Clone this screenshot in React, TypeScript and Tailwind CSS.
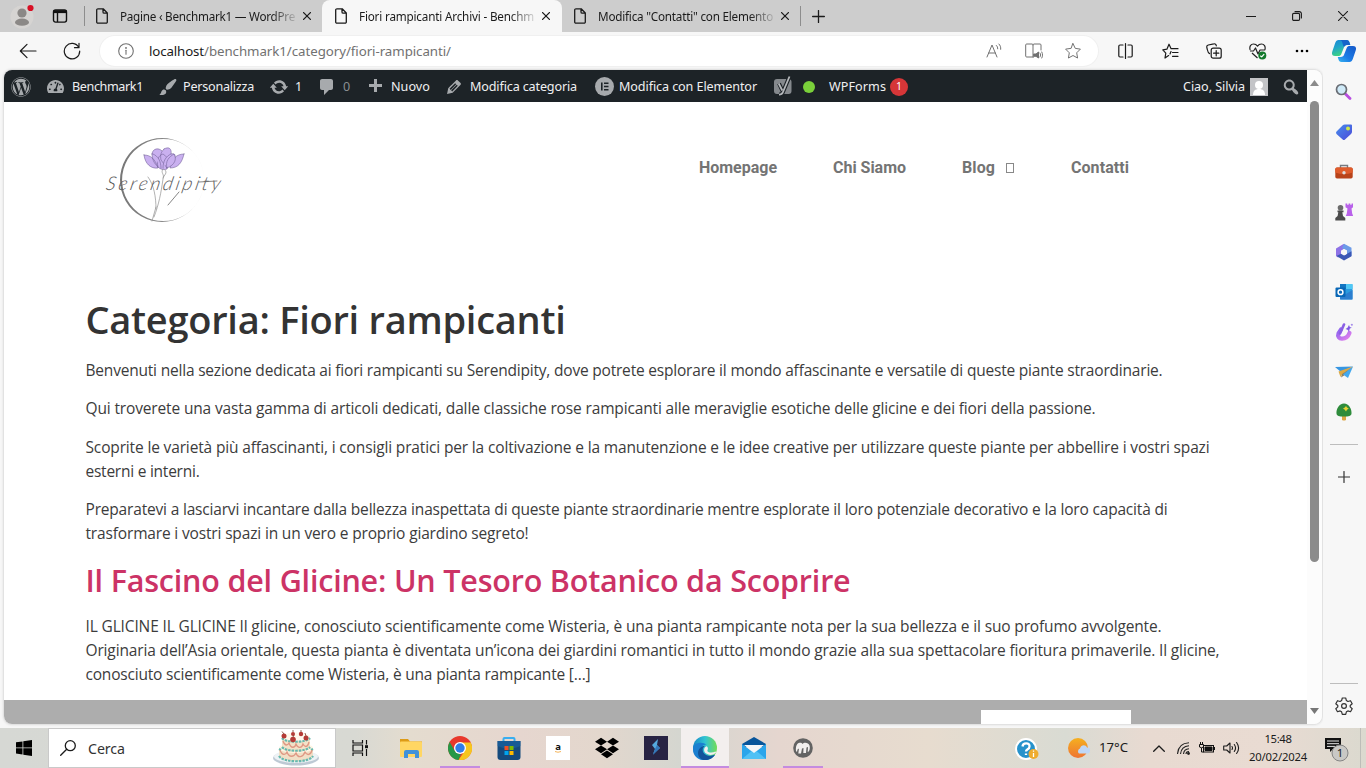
import { useLayoutEffect, useRef } from 'react';
import type { ReactNode } from 'react';
import { FaDropbox, FaTachometerAlt, FaWordpress } from 'react-icons/fa';

const UI = "font-['Noto_Sans','Open_Sans',sans-serif]";

/* One line of text whose tracking is adjusted so that it fills its box. */
function Line({ children, className }: { children: string; className: string }) {
  const box = useRef<HTMLDivElement>(null);
  const text = useRef<HTMLSpanElement>(null);
  useLayoutEffect(() => {
    if (!box.current || !text.current) return;
    text.current.style.letterSpacing = '0px';
    const spare = box.current.getBoundingClientRect().width - text.current.getBoundingClientRect().width;
    text.current.style.letterSpacing = `${spare / children.length}px`;
  }, [children]);
  return (
    <div ref={box} className={`shrink-0 whitespace-nowrap ${className}`}>
      <span ref={text}>{children}</span>
    </div>
  );
}

function Stroke({ children, className, box = '0 0 20 20', width = 1.2 }: { children: ReactNode; className: string; box?: string; width?: number }) {
  return (
    <svg viewBox={box} className={`shrink-0 ${className}`} fill="none" stroke="currentColor" strokeWidth={width} strokeLinecap="round" strokeLinejoin="round">
      {children}
    </svg>
  );
}

function Dash({ d, className }: { d: string; className: string }) {
  return (
    <svg viewBox="0 0 20 20" className={`size-5 shrink-0 text-[#a7aaad] ${className}`} fill="currentColor">
      <path d={d} />
    </svg>
  );
}

const PageIcon = () => (
  <Stroke className="h-4 w-3" box="0 0 12 16" width={1.3}>
    <path d="M2 .8h5.2L11.3 5v9a1.2 1.2 0 0 1-1.2 1.2H1.9A1.2 1.2 0 0 1 .7 14V2A1.2 1.2 0 0 1 2 .8zM7 .9V4a1.2 1.2 0 0 0 1.2 1.2h3" />
  </Stroke>
);
const TabClose = () => (
  <Stroke className="size-2" box="0 0 8 8" width={1.3}>
    <path d="M.6.6l6.8 6.8M7.4.6L.6 7.4" />
  </Stroke>
);

function TabTitle({ children }: { children: string }) {
  return (
    <div className="ml-3 w-[176px] [mask-image:linear-gradient(to_right,black_86%,transparent_102%)]">
      <Line className="w-[175px]">{children}</Line>
    </div>
  );
}

function TitleBar() {
  return (
    <header className="flex h-8 shrink-0 bg-[#cdcdcd] text-[11.7px] leading-4 text-[#1b1b1b]">
      <div className="flex w-[84px] shrink-0 items-center">
        <svg viewBox="0 0 24 28" className="ml-2 h-7 w-7 shrink-0">
          <circle cx="12" cy="15" r="11.5" fill="#d6d4d2" />
          <circle cx="12" cy="11" r="4.6" fill="#8b8886" />
          <ellipse cx="12" cy="20.2" rx="7" ry="3.6" fill="#8b8886" />
          <circle cx="20.5" cy="6" r="3.1" fill="#d80f24" />
        </svg>
        <svg viewBox="0 0 16 16" className="ml-4 size-4" fill="none" stroke="#111" strokeWidth="1.4">
          <rect x="1.5" y="1.9" width="13" height="12.2" rx="2" />
          <path d="M1.5 3.6h13" strokeWidth="3" />
          <path d="M5.5 4v10" />
        </svg>
      </div>
      <div className="my-1.5 w-px bg-[#8d8d8d]" />
      <div className="flex w-[237px] shrink-0 items-center pl-[11px]">
        <PageIcon />
        <TabTitle>Pagine ‹ Benchmark1 — WordPre</TabTitle>
        <div className="ml-[7px]"><TabClose /></div>
      </div>
      <div className="flex w-[240px] shrink-0 items-center rounded-t-lg bg-[#f7f7f7] pl-[13px]">
        <PageIcon />
        <TabTitle>Fiori rampicanti Archivi - Benchm</TabTitle>
        <div className="ml-[7px]"><TabClose /></div>
      </div>
      <div className="flex w-[238px] shrink-0 items-center pl-3">
        <PageIcon />
        <TabTitle>Modifica "Contatti" con Elemento</TabTitle>
        <div className="ml-[7px]"><TabClose /></div>
      </div>
      <div className="my-1.5 w-px bg-[#8d8d8d]" />
      <div className="flex w-9 items-center pl-[11px]">
        <Stroke className="size-[13px]" box="0 0 13 13" width={1.3}><path d="M6.5.6v11.8M.6 6.5h11.8" /></Stroke>
      </div>
      <div className="ml-auto flex items-center gap-9 pr-[18px]">
        <Stroke className="size-2.5" box="0 0 10 10" width={1.1}><path d="M.2 5.5h9.6" /></Stroke>
        <Stroke className="size-2.5" box="0 0 10 10" width={1.1}><rect x=".6" y="2.4" width="7" height="7" rx="1.2" /><path d="M3 .6h4.2a2.2 2.2 0 0 1 2.2 2.2V7" /></Stroke>
        <Stroke className="size-2.5" box="0 0 10 10" width={1.1}><path d="M.4.4l9.2 9.2M9.6.4L.4 9.6" /></Stroke>
      </div>
    </header>
  );
}

const STAR = 'M10 1.8l2.5 5.3 5.7.8-4.1 4.1 1 5.8-5.1-2.8-5.1 2.8 1-5.8L1.8 7.9l5.7-.8z';

function Toolbar() {
  return (
    <div className="flex h-[38px] shrink-0 items-center bg-[#f7f7f7] text-[#1a1a1a]">
      <Stroke className="ml-[19px] h-4 w-[18px]" box="0 0 18 16"><path d="M17 8H1.4M8 1.3L1.3 8 8 14.7" /></Stroke>
      <Stroke className="ml-[26px] size-[18px]" box="0 0 18 18"><path d="M15.8 5.5A7.7 7.7 0 1 0 16.7 9M16 1.3v4.4h-4.5" /></Stroke>
      <div className="ml-[19px] flex h-[30px] w-[998px] items-center rounded-full bg-white text-[#717171] ring-1 ring-[#f0f0f0]">
        <Stroke className="ml-[18px] size-4" box="0 0 16 16" width={1.1}><circle cx="8" cy="8" r="7.3" /><path d="M8 7.2v4" /><circle cx="8" cy="4.9" r=".4" fill="currentColor" /></Stroke>
        <Line className="mt-px ml-[15px] w-[55px] text-[13.3px] text-[#1a1a1a]">localhost</Line>
        <Line className="mt-px w-[247px] text-[13.3px]">/benchmark1/category/fiori-rampicanti/</Line>
        <div className="ml-auto flex items-center pr-4">
          <Stroke className="h-4 w-[17px]" box="0 0 17 16" width={1}><path d="M1 14L6 2l5 12M2.8 10h6.5M10.3 2.4c1 .8 1.4 1.9 1.4 3.4M12.9 1c1.4 1.4 2 3 1.8 5.3" /></Stroke>
          <Stroke className="ml-[22px] h-4 w-[18px]" box="0 0 18 16" width={1}><path d="M8.5 14H1.7a1 1 0 0 1-1-1V2a1 1 0 0 1 1-1H7a1 1 0 0 1 1 1v12M8 2a1 1 0 0 1 1-1h6a1 1 0 0 1 1 1v5M15 10c.8 1 .8 3 0 4M16.8 9c1 2 1 4.3 0 6" /><path d="M9 11h2l2.5-2v6L11 13.3H9z" fill="currentColor" /></Stroke>
          <Stroke className="ml-[21px] size-[18px]" width={1.1}><path d={STAR} /></Stroke>
        </div>
      </div>
      <div className="flex flex-1 items-center">
        <Stroke className="ml-5 h-4 w-[15px]" box="0 0 15 16"><path d="M5 2H2A1.2 1.2 0 0 0 .8 3.2v9.6A1.2 1.2 0 0 0 2 14h3M10 2h3a1.2 1.2 0 0 1 1.2 1.2v9.6A1.2 1.2 0 0 1 13 14h-3M7.5.6v14.8" /></Stroke>
        <Stroke className="ml-[29px] h-4 w-[17px]" box="0 0 17 16"><path d="M6.6 12.6L3 15l.8-4.9L.8 6.9l4.1-.7L7 1.2l2.1 4.5H16M10.500 9.500H16M10.500 13.300H16M9 8.500l-1 2.500" /></Stroke>
        <Stroke className="ml-[27px] size-4" box="0 0 16 16"><rect x="5.2" y="5.2" width="10" height="10" rx="2" /><path d="M10.2 7.6v5.2M7.6 10.2h5.2M3.6 10.6C2 10 1.7 8.5 1.3 6.5L.8 4.3A2 2 0 0 1 2.3 2L7.8.8A2 2 0 0 1 10.3 2.8" /></Stroke>
        <svg viewBox="0 0 18 17" className="ml-[27px] h-[17px] w-[18px]" fill="none" stroke="#222" strokeWidth="1.2" strokeLinejoin="round">
          <path d="M1.2 7C0 3.5 2 1 4.500 1 6.500 1 7.700 2 8.500 3.200 9.300 2 10.500 1 12.500 1 15 1 17 3.500 15.800 7M1 8h3.500l2-3 2.500 6 2-4h5M3 10l5.500 5" />
          <circle cx="13.3" cy="12.5" r="4" fill="#137a2c" stroke="none" /><path d="M11.3 12.7l1.4 1.2 2.5-2.8" stroke="#fff" />
        </svg>
        <svg viewBox="0 0 14 4" className="ml-7 h-1 w-[14px]"><circle cx="2" cy="2" r="1.3" /><circle cx="7" cy="2" r="1.3" /><circle cx="12" cy="2" r="1.3" /></svg>
        <svg viewBox="0 0 24 22" className="ml-[23px] h-[22px] w-6">
          <defs>
            <linearGradient id="copA" x1="0" y1="0" x2=".4" y2="1"><stop offset="0" stopColor="#1784d8" /><stop offset=".5" stopColor="#21a6c8" /><stop offset="1" stopColor="#40d67c" /></linearGradient>
            <linearGradient id="copB" x1="1" y1="0" x2="0" y2="1"><stop offset="0" stopColor="#1558c8" /><stop offset=".6" stopColor="#1b7ce6" /><stop offset="1" stopColor="#39b6f0" /></linearGradient>
          </defs>
          <path d="M6.5 0h8c2 0 2.500 1 3 2.500l.8 2.500h-3c-2 0-3 1-3.500 2.700L9.300 14c-.6 1.600-1.500 2-3 2H3c-2.700 0-3.600-2-2.700-4.600L3.200 3C3.900 1 5 0 6.500 0z" fill="url(#copA)" />
          <path d="M17.5 22h-8c-2 0-2.500-1-3-2.500L5.700 17h3c2 0 3-1 3.500-2.700L14.700 8c.6-1.600 1.500-2 3-2H21c2.700 0 3.600 2 2.700 4.600L20.800 19c-.7 2-1.800 3-3.300 3z" fill="url(#copB)" />
          <path d="M8 0h6.500c2 0 2.500 1 3 2.500l.8 2.500h-3c-1.500 0-2.500.5-3.200 2C10 4 11 1 8 0z" fill="#1664c9" />
        </svg>
      </div>
    </div>
  );
}

function AdminBar() {
  return (
    <div className="flex h-8 items-center bg-[#1d2327] pt-px text-[12.6px] leading-[31px] text-[#f0f0f1]">
      <FaWordpress className="ml-[7px] size-5 shrink-0 text-[#a7aaad]" />
      <FaTachometerAlt className="ml-4 size-[17px] shrink-0 text-[#a7aaad]" />
      <Line className="ml-2 w-[71px]">Benchmark1</Line>
      <Dash className="ml-[15px]" d="M18.33 3.57s.27-.8-.31-1.36c-.53-.52-1.22-.24-1.22-.24-.61.3-5.76 3.47-7.67 5.57-.86.96-2.06 3.79-1.09 4.82.92.98 3.96-.17 4.79-1 2.06-2.06 5.21-7.17 5.5-7.79zM1.4 17.65c2.37-1.56 1.46-3.41 3.23-4.64.93-.65 2.22-.62 3.08.29.63.67.8 2.57-.16 3.46-1.57 1.45-4 1.55-6.15.89z" />
      <Line className="ml-[5px] w-[71px]">Personalizza</Line>
      <Dash className="ml-[15px]" d="M10.2 3.28c3.53 0 6.43 2.61 6.92 6h2.08l-3.5 4-3.5-4h2.32c-.45-1.97-2.21-3.45-4.32-3.45-1.45 0-2.73.71-3.54 1.78L4.95 5.66C6.23 4.2 8.11 3.28 10.2 3.28zm-.4 13.44c-3.52 0-6.43-2.61-6.92-6H.8l3.5-4c1.17 1.33 2.33 2.67 3.5 4H5.48c.45 1.97 2.21 3.45 4.32 3.45 1.45 0 2.73-.71 3.54-1.78l1.71 1.95c-1.28 1.46-3.15 2.38-5.25 2.38z" />
      <Line className="ml-1.5 w-[7px]">1</Line>
      <Dash className="ml-[15px]" d="M5 2h9c1.1 0 2 .9 2 2v7c0 1.1-.9 2-2 2h-2l-5 5v-5H5c-1.1 0-2-.9-2-2V4c0-1.1.9-2 2-2z" />
      <Line className="ml-1.5 w-[7px] text-[#8b8f92]">0</Line>
      <Dash className="ml-[15px]" d="M17 7v3h-5v5H9v-5H4V7h5V2h3v5h5z" />
      <Line className="ml-1.5 w-[39px]">Nuovo</Line>
      <Dash className="ml-[14px]" d="M13.89 3.39l2.71 2.72c.46.46.42 1.24.03 1.64l-8.01 8.02-5.56 1.16 1.16-5.58s7.6-7.63 7.99-8.03c.39-.39 1.22-.39 1.68.07zm-2.73 2.79l-5.59 5.61 1.11 1.11 5.54-5.65zm-2.97 8.23l5.58-5.6-1.07-1.08-5.59 5.6z" />
      <Line className="ml-1.5 w-[107px]">Modifica categoria</Line>
      <svg viewBox="0 0 19 19" className="ml-[18px] size-[19px] shrink-0"><circle cx="9.5" cy="9.5" r="9.5" fill="#a7aaad" /><path d="M6 5.500h1.600v8H6zM9 5.500h4.500V7H9zM9 8.700h4.500v1.500H9zM9 12h4.500v1.500H9z" fill="#1d2327" /></svg>
      <Line className="ml-[5px] w-[138px]">Modifica con Elementor</Line>
      <svg viewBox="0 0 18 20" className="-mt-px ml-[17px] h-5 w-[18px] shrink-0">
        <rect x="0" y="3" width="17.5" height="15" rx="3" fill="#85898d" />
        <path d="M5 7.500l3.500 7.500M15.500.5L9 16q-1 2.700-4 2.700" fill="none" stroke="#1d2327" strokeWidth="4" />
        <path d="M4.700 7.500l3.600 7M15.500.5L9 16q-1 2.700-4 2.700" fill="none" stroke="#b4b7ba" strokeWidth="1.8" />
      </svg>
      <div className="ml-[11px] size-3 shrink-0 rounded-full bg-[#7ad03a]" />
      <Line className="ml-3.5 w-[57px]">WPForms</Line>
      <div className="ml-1 flex size-[18px] shrink-0 items-center justify-center rounded-full bg-[#d63638] text-[10.5px] text-white">1</div>
      <Line className="ml-auto w-[62px]">Ciao, Silvia</Line>
      <svg viewBox="0 0 18 18" className="ml-[5px] size-[18px] shrink-0"><path fill="#c3c4c7" d="M0 0h18v18H0z" /><circle cx="9" cy="7" r="4" fill="#fff" /><path d="M3 17c0-4 2-6 6-6s6 2 6 6z" fill="#fff" /></svg>
      <Dash className="mr-1.5 ml-[13px]" d="M12.14 4.18c1.87 1.87 2.11 4.75.72 6.89.12.1.22.21.36.31.2.16.47.36.81.59.34.24.56.39.66.47.42.31.73.57.94.78.32.32.6.65.84 1 .25.35.44.69.59 1.04.14.35.21.68.18 1-.02.32-.14.59-.36.81s-.49.34-.81.36c-.31.02-.65-.04-.99-.19-.35-.14-.7-.34-1.04-.59-.35-.24-.68-.52-1-.84-.21-.21-.47-.52-.77-.93-.1-.13-.25-.35-.47-.66-.22-.32-.4-.57-.56-.78-.16-.2-.29-.35-.44-.5-2.07 1.09-4.69.76-6.44-.98-2.14-2.15-2.14-5.64 0-7.78 2.15-2.15 5.63-2.15 7.78 0zm-1.41 6.36c1.36-1.37 1.36-3.58 0-4.95-1.37-1.37-3.59-1.37-4.95 0-1.37 1.37-1.37 3.58 0 4.95 1.36 1.37 3.58 1.37 4.95 0z" />
    </div>
  );
}

const Logo = () => (
  <svg viewBox="0 0 130 100" className="h-[100px] w-[130px] shrink-0" fill="none" strokeLinecap="round">
    <defs>
      <linearGradient id="ring" x1="0" y1="0" x2="1" y2="0"><stop offset="0" stopColor="#777" /><stop offset=".55" stopColor="#8a8a8a" /><stop offset=".85" stopColor="#ddd" /><stop offset="1" stopColor="#fff" /></linearGradient>
    </defs>
    <path fillRule="evenodd" fill="url(#ring)" d="M62 8a42 42 0 1 0 .01 0zM63.200 8.900a41.100 41.100 0 1 1-.01 0z" />
    <g fill="#c9b0ef" stroke="#65558a" strokeWidth=".5">
      <path d="M44 25c7 0 11 4 14 13-7 1-13-4-14-13zM84 24c-8 0-12 5-14 14 8 0 12-5 14-14zM52 24c1-8 11-6 12 1l-3 13c-6-2-9-8-9-14z" />
      <path d="M64 19c5-3 8 0 7 5 4-1 5 1 3 5l-7 9-6-8c-1-5 0-8 3-11zM58 37c-2-7 1-12 5-13 5 3 6 8 4 15-3 1-6 1-9-2z" />
      <path d="M67 38c-2-7 2-11 7-14 3 5 1 11-7 14zM53 24c5 2 8 7 8 14M71 24c-5 2-8 7-8 14" />
    </g>
    <path d="M63 39c-3 4 2 5 0 10-2 14-4 25-9 38M48 47c6 8 8 20 8 32M56 77l-4 14M65 40c3 3-1 5-2 8" stroke="#888" strokeWidth=".65" />
    <text x="18" y="60" transform="skewX(-12)" textLength="114" lengthAdjust="spacing" fill="#5a5a5a" className="font-['Lato'] text-[19px] font-light italic">Serendipity</text>
    <path d="M79 62l-11 13M99 52l18-1" stroke="#666" strokeWidth=".8" />
  </svg>
);

function WebPage() {
  return (
    <div className="flex min-w-0 flex-1 flex-col bg-white">
      <AdminBar />
      <div className="flex h-[194px] shrink-0 pt-7 pl-24">
        <Logo />
        <nav className="ml-[469px] flex h-[75px] items-center font-['Roboto',sans-serif] text-base font-bold text-[#747474]">
          <Line className="w-[78px]">Homepage</Line>
          <Line className="ml-14 w-[73px]">Chi Siamo</Line>
          <Line className="ml-14 w-[33px]">Blog</Line>
          <div className="ml-[11px] h-2.5 w-2 border border-[#888]" />
          <Line className="ml-[57px] w-[58px]">Contatti</Line>
        </nav>
      </div>
      <main className="flex h-[404px] shrink-0 flex-col pl-[81.5px] font-['Open_Sans',sans-serif] text-[15.5px] leading-6 text-[#3c3c3c]">
        <Line className="-mt-px mb-px w-[480px] text-[38px] leading-[48px] font-semibold text-[#333]">Categoria: Fiori rampicanti</Line>
        <Line className="mt-[14px] w-[1077px]">Benvenuti nella sezione dedicata ai fiori rampicanti su Serendipity, dove potrete esplorare il mondo affascinante e versatile di queste piante straordinarie.</Line>
        <Line className="mt-[14px] w-[1010px]">Qui troverete una vasta gamma di articoli dedicati, dalle classiche rose rampicanti alle meraviglie esotiche delle glicine e dei fiori della passione.</Line>
        <Line className="mt-[15px] w-[1124px]">Scoprite le varietà più affascinanti, i consigli pratici per la coltivazione e la manutenzione e le idee creative per utilizzare queste piante per abbellire i vostri spazi</Line>
        <Line className="w-[114px]">esterni e interni.</Line>
        <Line className="mt-[14px] w-[1082px]">Preparatevi a lasciarvi incantare dalla bellezza inaspettata di queste piante straordinarie mentre esplorate il loro potenziale decorativo e la loro capacità di</Line>
        <Line className="w-[443px]">trasformare i vostri spazi in un vero e proprio giardino segreto!</Line>
        <Line className="mt-4 w-[765px] text-[30.5px] leading-[38px] font-semibold text-[#c36]">Il Fascino del Glicine: Un Tesoro Botanico da Scoprire</Line>
        <Line className="mt-[15px] w-[1076px]">IL GLICINE IL GLICINE Il glicine, conosciuto scientificamente come Wisteria, è una pianta rampicante nota per la sua bellezza e il suo profumo avvolgente.</Line>
        <Line className="w-[1134px]">Originaria dell’Asia orientale, questa pianta è diventata un’icona dei giardini romantici in tutto il mondo grazie alla sua spettacolare fioritura primaverile. Il glicine,</Line>
        <Line className="w-[505px]">conosciuto scientificamente come Wisteria, è una pianta rampicante […]</Line>
      </main>
      <footer className="flex flex-1 bg-[#adadad] pt-2.5 pl-[977px]">
        <div className="w-[150px] bg-white" />
      </footer>
    </div>
  );
}

const Scrollbar = () => (
  <div className="flex w-[15px] shrink-0 flex-col items-center bg-[#fcfcfc]">
    <svg viewBox="0 0 9 6" className="mt-2.5 h-1.5 w-[9px]"><path d="M4.5 0L9 6H0z" fill="#8b8b8b" /></svg>
    <div className="mt-[15px] h-[461px] w-[9px] rounded-full bg-[#8b8b8b]" />
    <svg viewBox="0 0 9 6" className="mt-auto mb-2.5 h-1.5 w-[9px]"><path d="M0 0h9L4.5 6z" fill="#777" /></svg>
  </div>
);

const sideIcons: ReactNode[] = [
  <><path d="M10.500 11l4.500 4.500" stroke="#b84ee0" strokeWidth="2.8" strokeLinecap="round" /><circle cx="6.5" cy="6.5" r="5" fill="#cfeaf8" stroke="#6a6e75" strokeWidth="1.7" /></>,
  <><path d="M1.500 8.500L7.500 2.500q1-1 2.300-1H16q1 0 1 1v6.200q0 1.300-1 2.300L10 16.500q-1.200 1-2.300 0L1.500 11q-1-1.200 0-2.500z" fill="url(#tag)" /><circle cx="13" cy="5.5" r="2" fill="#cce84b" /></>,
  <><path d="M5.500 5V2.500h7V5" fill="none" stroke="#767a80" strokeWidth="1.4" /><rect x=".3" y="4.5" width="17.4" height="11" rx="1.7" fill="#b8431a" /><path d="M.3 6q0-1.500 1.500-1.500h14.400q1.500 0 1.500 1.500v3.500q-8.700 3-17.400 0z" fill="#df5c2c" /><circle cx="9" cy="9.8" r="1.7" fill="#ddd" /></>,
  <><path d="M10.500.5h1.700v1.300h1.400V.5h1.700v1.300h1.300V.5h1.400v3.700l-1.500 1.300.7 5 1 2.500h-7.400l1-2.500.7-5-2-1.300z" fill="#b961ea" /><circle cx="5.5" cy="4.8" r="2.800" fill="#6b6b6b" /><path d="M2.500 7.500h6v1.700H7.300l.7 3.800 2.300 2v2.500h-10V15l2.300-2 .7-3.800H2.500z" fill="#4b4b4b" /></>,
  <><path d="M1 5.500L8.500 1l4.500 2.500-6.500 4v5L3 14.500l-2-1.500z" fill="#8e72e6" /><path d="M9 .8l7.500 4v8L13 15l-1-4V7.500L7 5z" fill="#6c9be8" /><path d="M1.500 13l5-2.500 3 1.700 7-4v5L9 17.500z" fill="#3b57b4" /><path d="M9 6l3 1.700v3L9 12.500l-3-1.800v-3z" fill="#f7f7f7" /></>,
  <><rect x="5" y="1" width="12.5" height="15.5" rx="1" fill="#2b9bdf" /><path d="M11 1h6.500v5H11z" fill="#50c8f5" /><path d="M5 1h6v5H5z" fill="#1276c2" /><path d="M5 13l6-2 6.500-4v9.500H5z" fill="#2c7ecf" /><rect x=".5" y="4.5" width="10" height="9.5" rx="1" fill="#0867b6" /><circle cx="5.5" cy="9.2" r="2.4" fill="none" stroke="#fff" strokeWidth="1.5" /></>,
  <><path d="M6 6.500L3.500 10.500c-2.500 6.500 8 7.500 11-.5" fill="none" stroke="url(#designer)" strokeWidth="4.200" strokeLinecap="round" /><path d="M9 1.500L5 10.500" stroke="#8a5fe4" strokeWidth="2.600" strokeLinecap="round" /><path d="M14 2l.8 2 2 .7-2 .9-.8 3-1.500-1.900-2-.6 2-1.400zM17 .5l.3 1 1 .3-1 .4-.3 1-.5-1-1-.4 1-.3z" fill="#7f57e4" /></>,
  <><path d="M0 4l18-.5L6 9z" fill="#3796e1" /><path d="M3.500 8.500L18 3.500 7 11.500 5.500 14z" fill="#dda944" /><path d="M7 11l11-7.500L9 12.500l-3 2z" fill="#8a7f62" /><path d="M18 3.500L13 15l-5-3.500z" fill="#42a8ee" /></>,
  <><rect x="7" y="11" width="4" height="6.500" rx="1.2" fill="#dda747" /><path d="M9 .5c5 0 8 6 7.500 10 0 2.500-3 3-7.500 3s-7.500-.5-7.500-3C1 6.500 4 .5 9 .5z" fill="#2f8c3c" /><path d="M11 3l1 1.600 1.800 1L12 6.800 11 8.500 9.800 6.800 8 5.600l1.800-1z" fill="#e8d332" /></>,
];

function Sidebar() {
  return (
    <aside className="flex w-[43px] shrink-0 flex-col items-center bg-[#f7f7f7] pt-0.5 pr-0.5 text-[#333]">
      <svg className="h-0 w-0">
        <linearGradient id="tag" x1="0" y1="0" x2="1" y2="1"><stop stopColor="#478eed" /><stop offset="1" stopColor="#4c49d8" /></linearGradient>
        <linearGradient id="designer" x1="0" y1="0" x2="1" y2="1"><stop stopColor="#8d62ef" /><stop offset="1" stopColor="#e381ed" /></linearGradient>
      </svg>
      {sideIcons.map((icon, i) => (
        <div key={i} className="flex h-10 shrink-0 items-center">
          <svg viewBox="0 0 18 18" className="size-[18px]">{icon}</svg>
        </div>
      ))}
      <div className="mt-3 h-px w-7 bg-[#bdbdbd]" />
      <Stroke className="mt-[26px] size-3" box="0 0 12 12"><path d="M6 .5v11M.5 6h11" /></Stroke>
      <div className="mt-auto h-px w-7 bg-[#bdbdbd]" />
      <Stroke className="mt-[13px] mb-[13px] size-[18px]" box="0 0 18 18"><circle cx="9" cy="9" r="2.4" /><path d="M7.3 1h3.4l.7 2.6 1.5.9 2.6-.8 1.7 3-2 1.8v1.4l2 1.8-1.7 3-2.6-.8-1.5.9-.7 2.6H7.300l-.7-2.600-1.500-.9-2.600.8-1.700-3 2-1.800V8.500l-2-1.800 1.700-3 2.600.8 1.500-.9z" /></Stroke>
    </aside>
  );
}

const Cake = () => (
  <svg viewBox="0 0 48 36" className="h-9 w-12">
    <ellipse cx="24" cy="28" rx="23" ry="7.500" fill="#bdc9d4" /><ellipse cx="24" cy="26.500" rx="22" ry="6.500" fill="#edf2f5" />
    <path d="M7 18v8c3 7 31 7 34 0v-8z" fill="#f1dfc6" /><ellipse cx="24" cy="18" rx="17" ry="5" fill="#fff5e4" />
    <path d="M10 7v11c3 5 25 5 28 0V7z" fill="#f3e2c8" /><ellipse cx="24" cy="7" rx="14" ry="4.500" fill="#fff8ec" />
    <g fill="none" stroke="#65b9ae" strokeWidth="2.200" strokeDasharray="2.500 1"><path d="M10 8c4 5 24 5 28 0M10 17c4 5 24 5 28 0M7 19l2 1M39 20l2-1M7 26c4 7 30 7 34 0" /></g>
    <path d="M11 11c2 6 5 4 6 2 2 6 6 5 7 1 2 5 6 4 7 0 2 4 5 3 6-2M8 20c2 6 6 5 7 2 2 6 7 5 9 1 2 6 7 4 9-1 2 4 6 3 7-2" fill="none" stroke="#df9884" strokeWidth="1.300" />
    <g fill="#b43a36"><circle cx="12" cy="6" r="2.500" /><circle cx="21" cy="4" r="2" /><circle cx="29" cy="4" r="2.200" /><circle cx="34" cy="8" r="2.500" /><circle cx="21" cy="9.500" r="2.800" /></g>
    <path d="M12 4L10 1.500M21 2V0M29 2V0M34 6l-1-3M21 7l1-2" stroke="#7a3f2e" strokeWidth=".8" />
  </svg>
);

const apps: { icon: ReactNode; active?: boolean; line?: string }[] = [
  { icon: <><path d="M1 3h8l2 2.500h12V10H1z" fill="#dd9b17" /><rect x="1" y="5.500" width="22" height="15.500" rx="1" fill="#ffd663" /><path d="M5 22v-6q0-2 2-2h11q2 0 2 2v6h-4v-4H9v4z" fill="#4192d9" /></> },
  { line: 'bg-[#c48be0]', icon: <><circle cx="12" cy="12" r="12" fill="#e8382c" /><path d="M12 6.500h10.700A12 12 0 0 1 10.500 24l6.200-9z" fill="#f7c51e" /><path d="M1.600 6l5 8.500q2 3.500 6.400 3.300L10.500 24A12 12 0 0 1 1.600 6z" fill="#279847" /><circle cx="12" cy="12" r="6" fill="#fff" /><circle cx="12" cy="12" r="4.700" fill="#317de9" /></> },
  { icon: <><path d="M6.500 7V3q0-1 1-1h9q1 0 1 1v4" fill="none" stroke="#38aef0" strokeWidth="2" /><path d="M.5 5h23v16q0 3-3 3h-17q-3 0-3-3z" fill="#154a7d" /><path d="M.5 5h23v5L12 14 .5 10z" fill="#1b66a5" opacity=".6" /><path d="M7.500 10h4v4h-4z" fill="#f25022" /><path d="M12.500 10h4v4h-4z" fill="#7fba00" /><path d="M7.500 15h4v4h-4z" fill="#00a4ef" /><path d="M12.500 15h4v4h-4z" fill="#ffb900" /></> },
  { icon: <><path fill="#fff" d="M0 0h24v24H0z" /><text x="12" y="14" textAnchor="middle" fill="#111" className="text-[9.5px] font-bold">a</text><path d="M9 15.500q3 1.500 6 0" stroke="#f3a334" fill="none" strokeWidth=".8" /></> },
  { icon: <FaDropbox size={24} color="#000" /> },
  { icon: <><path fill="#272343" d="M0 0h24v24H0z" /><path d="M14 3l-6 6 3 4-2 5 7-6-3-3z" fill="#55a9dd" /><path d="M11 13l-2 6 7-7-3-3z" fill="#3377ba" /></> },
  { active: true, line: 'bg-[#c48be0]', icon: <><circle cx="12" cy="12" r="12" fill="url(#edgeTop)" /><path d="M0 13C0 6 10 5 13.500 9c-4-1-6 3-4.500 6 2 5 8 6 13 4-6 8-22 7-22-6z" fill="#1b7fd0" /><path d="M9 23.600C2 20 5 10 12 9.800c-3 2-3 6-.5 8 3 3 7 2.500 10.500 1-2.500 4-8 6.500-13 4.800z" fill="#11549b" /><path d="M13.700 10.200c2.500 2 .3 4 .8 5 1 1.600 5 2 8 .3q.8 0 .3 1.500-5 3.500-9.600.5c-3-2-2.700-6.500.5-7.300z" fill="#f3efee" /></> },
  { icon: <><path d="M0 8l12-7 12 7v3H0z" fill="#07559b" /><path d="M0 8l12 9 12-9v15H0z" fill="#2aa5eb" /><path d="M0 23l12-10 12 10z" fill="#50c1f5" /><path d="M2 9h20l-10 8z" fill="#f4f6f8" /></> },
  { line: 'bg-[#c48be0]', icon: <><circle cx="12" cy="12" r="9.800" fill="#636363" /><path d="M5 15c-.5-5 1-8 3.500-8.300C10 6.500 11 7 11.500 8 13 6 17.500 6.300 18.500 9.500c.8 3 0 6-1.800 6.500l.3-5-1.500.5-.5 5.500h-2.700l.2-5-1.500.5-1 5H7.300l.7-5-1.500 1L6 16z" fill="#f2efee" /></> },
];

function Taskbar() {
  return (
    <footer className="flex h-10 shrink-0 items-center bg-[linear-gradient(90deg,#d6d8d4_0%,#d8d9d3_26%,#e4dccf_30%,#e6d6cf_38%,#e3d7cd_44%,#d4d6d0_50%,#e5d6cf_57%,#e7dccf_68%,#d9dbd3_78%,#e8dad1_84%,#e9dbd2_93%,#dbd9cf_100%)] text-[#1b1b1b]">
      <svg viewBox="0 0 16 16" className="ml-4 size-4 shrink-0"><path d="M0 2.300l6.500-.9v6.100H0zM7.300 1.300L16 0v7.500H7.300zM0 8.300h6.500v6.200L0 13.600zM7.300 8.300H16V16l-8.700-1.300z" /></svg>
      <div className="ml-4 flex h-10 w-[288px] shrink-0 items-center border border-[#c9c9c9] bg-white">
        <Stroke className="ml-[11px] size-4" box="0 0 16 16" width={1.3}><circle cx="10.3" cy="5.7" r="5" /><path d="M6.7 9.3L.7 15.3" /></Stroke>
        <Line className="mt-px ml-3 w-[37px] text-[14.2px] text-[#333]">Cerca</Line>
        <div className="ml-auto pr-[15px]"><Cake /></div>
      </div>
      <div className="flex w-[50px] shrink-0 pl-4">
        <svg viewBox="0 0 16 16" className="size-4" fill="none" stroke="#111" strokeWidth="1.2"><path d="M1 0v3h9.500V0M1 16v-3h9.500v3M1 5h9.500v6H1zM14.500 0v4.500M14.500 9v7" /><path d="M13 5.200h3v3h-3z" fill="#111" stroke="none" /></svg>
      </div>
      <svg className="h-0 w-0 shrink-0"><linearGradient id="edgeTop"><stop stopColor="#1688c7" /><stop offset=".5" stopColor="#32c4d3" /><stop offset="1" stopColor="#72dc57" /></linearGradient></svg>
      <div className="flex">
        {apps.map((app, i) => (
          <div key={i} className={app.active ? 'ml-px flex h-10 w-12 shrink-0 flex-col items-center bg-[#f3efee] pt-2' : 'flex h-10 w-[49px] shrink-0 flex-col items-center pt-2'}>
            <svg viewBox="0 0 24 24" className="size-6 shrink-0">{app.icon}</svg>
            {app.line && <div className={`mt-auto h-0.5 ${app.active ? 'w-full' : 'w-10'} ${app.line}`} />}
          </div>
        ))}
      </div>
      <div className="ml-auto flex h-full shrink-0 items-center">
        <svg viewBox="0 0 24 22" className="mt-0.5 h-[22px] w-6"><circle cx="11" cy="11" r="10" fill="#2692cb" stroke="#fff" strokeWidth="2" /><path d="M7.500 8.500C8 4 15 4.500 14.500 8.500c0 3-3.500 2.500-3.500 5M11 15.500v1.500" fill="none" stroke="#fff" strokeWidth="2.300" /><circle cx="18.500" cy="16" r="5" fill="#efac2f" /><path d="M18.500 15v4M18.500 12.500v1.200" stroke="#fff" strokeWidth="1.300" /></svg>
        <svg viewBox="0 0 22 20" className="ml-[29px] h-5 w-[22px]"><circle cx="10" cy="10" r="10" fill="url(#sun)" /><linearGradient id="sun" x1="0" y1="0" x2="0" y2="1"><stop stopColor="#f5b01f" /><stop offset="1" stopColor="#ee7433" /></linearGradient><path d="M11 15.500a3 3 0 0 1 1-5c1-4 6-4 7-1 4-.5 4 5.500 1 6z" fill="#bfd7f7" /></svg>
        <Line className="ml-[9px] w-[29px] text-[13.2px]">17°C</Line>
        <Stroke className="ml-[25px] h-[7px] w-3" box="0 0 12 7" width={1.3}><path d="M.7 6.300L6 1l5.300 5.300" /></Stroke>
        <svg viewBox="0 0 13 13" className="ml-3 size-[13px]" fill="none" stroke="#222" strokeWidth="1.1"><path d="M.5 12C1 5 5 1 12 .7M3.500 12C4 7 7 4 12 3.700M6.500 12c.3-3 2-5 5.500-5.200M9 12c0-1.500 1-2.400 3-2.500" /><circle cx="11.500" cy="11.500" r="1.400" fill="#222" stroke="none" /></svg>
        <svg viewBox="0 0 16 12" className="ml-[9px] h-3 w-4" fill="none" stroke="#111"><rect x="4.500" y="3.500" width="10" height="6.500" /><path d="M6 5h7v3.500H6z" fill="#111" /><path d="M15.500 5v3M.5 2.500h4V5q-2 1.500-4 0zM1.500 0v2.500M3.500 0v2.500M2.500 6v4h2" /></svg>
        <Stroke className="ml-2 h-[14px] w-[17px]" box="0 0 17 14" width={1.1}><path d="M.7 5h3L7 2v10L3.700 9h-3zM9 5.500q1 1.500 0 3M11.300 3.500q2.500 3.500 0 7M13.600 1.500q4 5.500 0 11" /></Stroke>
        <div className="ml-[9px] flex w-[58px] flex-col items-center text-[11.3px] leading-[18px]">
          <Line className="w-[27px]">15:48</Line>
          <Line className="w-[58px]">20/02/2024</Line>
        </div>
        <svg viewBox="0 0 26 26" className="mt-1 ml-[17px] size-[26px]"><path d="M1 1h16v11H9l-3 3v-3H1z" fill="#111" /><path d="M3 4h12M3 6.700h12M3 9.400h8" stroke="#fff" strokeWidth=".9" /><circle cx="16" cy="16" r="8" fill="#c9c8c5" stroke="#858585" /><text x="16" y="20" textAnchor="middle" fill="#222" className="text-[11.5px]">1</text></svg>
        <div className="ml-2.5 h-full w-px bg-[#bdbdb8]" />
        <div className="w-[5px]" />
      </div>
    </footer>
  );
}

export default function App() {
  return (
    <div className={`flex h-[768px] w-[1366px] flex-col overflow-hidden bg-[#f7f7f7] ${UI}`}>
      <TitleBar />
      <Toolbar />
      <div className="flex h-[658px] shrink-0">
        <div className="ml-1 flex h-[654px] w-[1318px] shrink-0 overflow-hidden rounded-lg shadow-[0_0_3px_#bbb]">
          <WebPage />
          <Scrollbar />
        </div>
        <div className="w-px shrink-0" />
        <Sidebar />
      </div>
      <Taskbar />
    </div>
  );
}
